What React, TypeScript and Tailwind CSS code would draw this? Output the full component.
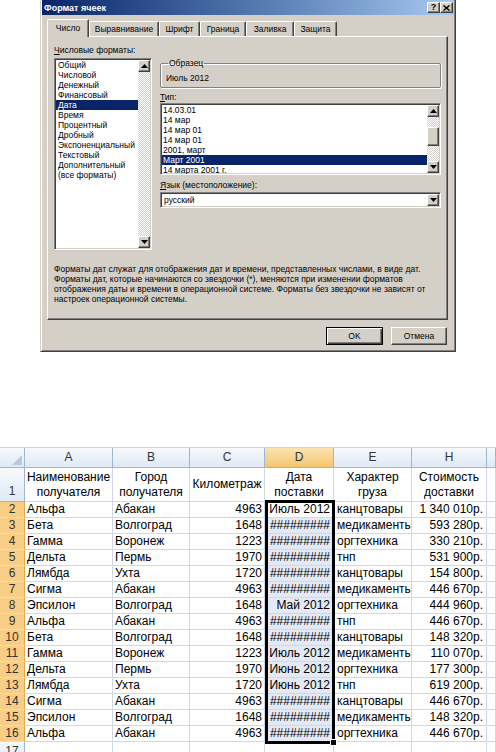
import React from "react";

const UpArrow = () => (
  <svg width="7" height="4" viewBox="0 0 7 4"><path d="M3.5 0L7 4H0Z" fill="#000" /></svg>
);
const DownArrow = () => (
  <svg width="7" height="4" viewBox="0 0 7 4"><path d="M0 0H7L3.5 4Z" fill="#000" /></svg>
);

const raised =
  "border border-t-white border-l-white border-r-[#404040] border-b-[#404040] shadow-[inset_-1px_-1px_0_#808080] bg-[#D4D0C8]";
const sunken =
  "border border-t-[#808080] border-l-[#808080] border-r-white border-b-white shadow-[inset_1px_1px_0_#404040,inset_-1px_-1px_0_#D4D0C8]";
const checker =
  "bg-[repeating-conic-gradient(#d4d0c8_0_25%,#ffffff_0_50%)] [background-size:2px_2px]";

function ScrollBtn({ up }: { up?: boolean }) {
  return (
    <div className={`${raised} h-[12px] w-[12px] flex items-center justify-center shrink-0`}>
      {up ? <UpArrow /> : <DownArrow />}
    </div>
  );
}

const formats = [
  "Общий",
  "Числовой",
  "Денежный",
  "Финансовый",
  "Дата",
  "Время",
  "Процентный",
  "Дробный",
  "Экспоненциальный",
  "Текстовый",
  "Дополнительный",
  "(все форматы)",
];

const types = [
  "14.03.01",
  "14 мар",
  "14 мар 01",
  "14 мар 01",
  "2001, март",
  "Март 2001",
  "14 марта 2001 г.",
];

const tabs: { label: string; w: string }[] = [
  { label: "Выравнивание", w: "w-[70px]" },
  { label: "Шрифт", w: "w-[41px]" },
  { label: "Граница", w: "w-[46px]" },
  { label: "Заливка", w: "w-[48px]" },
  { label: "Защита", w: "w-[43px]" },
];

function Dialog() {
  return (
    <div className="ml-[40px] w-[416px] h-[352px] bg-[#D4D0C8] border-x border-b border-l-[#D4D0C8] border-r-[#404040] border-b-[#404040] shadow-[inset_1px_0_0_#ffffff,inset_-1px_-1px_0_#808080] flex flex-col text-[8.5px] leading-[10px] text-black">
      {/* title bar */}
      <div className="h-[15px] mx-[1px] bg-linear-to-r from-[#0A246A] to-[#A6CAF0] flex items-center justify-between pl-[2px] pr-[1px]">
        <span className="font-bold text-white text-[9px]">Формат ячеек</span>
        <div className="flex">
          <div className={`${raised} w-[13px] h-[11px] flex items-center justify-center text-[9px] font-bold leading-none`}>?</div>
          <div className={`${raised} w-[13px] h-[11px] flex items-center justify-center`}>
            <svg width="7" height="6" viewBox="0 0 7 6">
              <path d="M0.5 0.5L6.5 5.5M6.5 0.5L0.5 5.5" stroke="#000" strokeWidth="1.5" />
            </svg>
          </div>
        </div>
      </div>

      <div className="pl-[6px] pr-[7px] flex flex-col">
        {/* tabs */}
        <div className="mt-[4px] h-[17px] flex items-end relative z-10">
          <div className="w-[42px] h-[18px] -mb-[1px] bg-[#D4D0C8] border-t border-l border-t-white border-l-white border-r border-r-[#404040] shadow-[inset_-1px_0_0_#808080] rounded-t-[2px] flex items-start justify-center pt-[3px]">
            Число
          </div>
          {tabs.map((t) => (
            <div
              key={t.label}
              className={`${t.w} h-[15px] border-t border-l border-t-white border-l-white border-r border-r-[#404040] shadow-[inset_-1px_0_0_#808080] rounded-t-[2px] flex items-start justify-center pt-[2px]`}
            >
              {t.label}
            </div>
          ))}
        </div>

        {/* panel */}
        <div className="h-[284px] border border-t-white border-l-white border-r-[#404040] border-b-[#404040] shadow-[inset_-1px_-1px_0_#808080] pt-[8px] pl-[6px] pr-[6px] flex flex-col">
          <div className="flex gap-[8px]">
            {/* left column */}
            <div className="w-[98px] flex flex-col">
              <div className="h-[10px] mb-[3px] whitespace-nowrap">
                <u>Ч</u>исловые форматы:
              </div>
              <div className={`${sunken} h-[192px] bg-white flex`}>
                <div className="flex-1 pt-[1px] pl-[1px] overflow-hidden">
                  {formats.map((f) => (
                    <div
                      key={f}
                      className={`h-[10px] pl-[2px] whitespace-nowrap ${f === "Дата" ? "bg-[#0A246A] text-white" : ""}`}
                    >
                      {f}
                    </div>
                  ))}
                </div>
                <div className="w-[12px] flex flex-col mt-[1px] mb-[1px] mr-[1px]">
                  <ScrollBtn up />
                  <div className={`flex-1 ${checker}`} />
                  <ScrollBtn />
                </div>
              </div>
            </div>

            {/* right column */}
            <div className="flex-1 flex flex-col mt-[13px]">
              <fieldset className="h-[30px] border border-[#808080] shadow-[inset_1px_1px_0_#ffffff,1px_1px_0_#ffffff] rounded-[2px] pl-[5px]">
                <legend className="ml-[2px] px-[1px] leading-[10px]">Образец</legend>
                <div className="pt-[5px]">Июль 2012</div>
              </fieldset>
              <div className="mt-[4px] h-[10px]">
                <u>Т</u>ип:
              </div>
              <div className={`${sunken} mt-[1px] h-[72px] bg-white flex`}>
                <div className="flex-1 pt-[1px] pl-[1px] overflow-hidden">
                  {types.map((t, i) => (
                    <div
                      key={i}
                      className={`h-[10px] pl-[1px] whitespace-nowrap ${i === 5 ? "bg-[#0A246A] text-white" : ""}`}
                    >
                      {t}
                    </div>
                  ))}
                </div>
                <div className="w-[12px] flex flex-col my-[1px] mr-[1px]">
                  <ScrollBtn up />
                  <div className={`h-[10px] ${checker}`} />
                  <div className={`${raised} h-[19px]`} />
                  <div className={`flex-1 ${checker}`} />
                  <ScrollBtn />
                </div>
              </div>
              <div className="mt-[5px] h-[10px] whitespace-nowrap">
                <u>Я</u>зык (местоположение):
              </div>
              <div className={`${sunken} mt-[2px] h-[16px] bg-white flex items-center`}>
                <div className="flex-1 pl-[3px]">русский</div>
                <div className="mr-[1px]">
                  <ScrollBtn />
                </div>
              </div>
            </div>
          </div>

          <div className="mt-[14px] whitespace-nowrap">
            Форматы дат служат для отображения дат и времени, представленных числами, в виде дат.
            <br />
            Форматы дат, которые начинаются со звездочки (*), меняются при изменении форматов
            <br />
            отображения даты и времени в операционной системе. Форматы без звездочки не зависят от
            <br />
            настроек операционной системы.
          </div>
        </div>

        {/* buttons */}
        <div className="mt-[7px] flex justify-end gap-[8px] mr-[1px]">
          <div className="w-[57px] h-[18px] bg-[#D4D0C8] border border-black shadow-[inset_1px_1px_0_#ffffff,inset_-1px_-1px_0_#404040,inset_-2px_-2px_0_#808080] flex items-center justify-center">
            OK
          </div>
          <div className={`${raised} w-[56px] h-[18px] flex items-center justify-center`}>Отмена</div>
        </div>
      </div>
    </div>
  );
}

const data: string[][] = [
  ["Альфа", "Абакан", "4963", "Июль 2012", "канцтовары", "1 340 010р."],
  ["Бета", "Волгоград", "1648", "#########", "медикаменты", "593 280р."],
  ["Гамма", "Воронеж", "1223", "#########", "оргтехника", "330 210р."],
  ["Дельта", "Пермь", "1970", "#########", "тнп", "531 900р."],
  ["Лямбда", "Ухта", "1720", "#########", "канцтовары", "154 800р."],
  ["Сигма", "Абакан", "4963", "#########", "медикаменты", "446 670р."],
  ["Эпсилон", "Волгоград", "1648", "Май 2012", "оргтехника", "444 960р."],
  ["Альфа", "Абакан", "4963", "#########", "тнп", "446 670р."],
  ["Бета", "Волгоград", "1648", "#########", "канцтовары", "148 320р."],
  ["Гамма", "Воронеж", "1223", "Июль 2012", "медикаменты", "110 070р."],
  ["Дельта", "Пермь", "1970", "Июнь 2012", "оргтехника", "177 300р."],
  ["Лямбда", "Ухта", "1720", "Июнь 2012", "тнп", "619 200р."],
  ["Сигма", "Абакан", "4963", "#########", "канцтовары", "446 670р."],
  ["Эпсилон", "Волгоград", "1648", "#########", "медикаменты", "148 320р."],
  ["Альфа", "Абакан", "4963", "#########", "оргтехника", "446 670р."],
];

const gridCols = "grid grid-cols-[25px_88px_77px_75px_69px_78px_75px_9px]";
const hdr =
  "bg-linear-to-b from-[#F7F9FC] to-[#E1E9F5] border-r border-b border-[#9EB6CE] text-center leading-[19px] text-[#333333]";
const cell = "border-r border-b border-[#D0D7E5] whitespace-nowrap overflow-hidden leading-[15px]";

function Sheet() {
  return (
    <div className="border-t border-[#C9D5E4] text-[12px] text-black">
      <div className="relative">
        {/* column headers */}
        <div className={`${gridCols} h-[20px]`}>
          <div className={`${hdr} relative`}>
            <svg className="absolute right-[2px] bottom-[2px]" width="10" height="10" viewBox="0 0 10 10">
              <path d="M10 0V10H0Z" fill="#B9C9DD" />
            </svg>
          </div>
          {["A", "B", "C"].map((l) => (
            <div key={l} className={hdr}>{l}</div>
          ))}
          <div className="bg-linear-to-b from-[#FBE3B1] to-[#F5C56C] border-r border-b border-[#F0A830] text-center leading-[19px] text-[#333333]">
            D
          </div>
          {["E", "H"].map((l) => (
            <div key={l} className={hdr}>{l}</div>
          ))}
          <div className={hdr} />
        </div>

        {/* row 1 */}
        <div className={`${gridCols} h-[34px]`}>
          <div className={`${hdr} flex items-end justify-center leading-[15px]`}>1</div>
          {[
            ["Наименование", "получателя"],
            ["Город", "получателя"],
            ["Километраж"],
            ["Дата", "поставки"],
            ["Характер", "груза"],
            ["Стоимость", "доставки"],
          ].map((lines, i) => (
            <div key={i} className={`${cell} flex flex-col items-center justify-center`}>
              {lines.map((ln) => (
                <span key={ln}>{ln}</span>
              ))}
            </div>
          ))}
          <div className={cell} />
        </div>

        {/* data rows */}
        {data.map((r, i) => (
          <div key={i} className={`${gridCols} h-[16px]`}>
            <div className="bg-[#F8CE86] border-r border-b border-r-[#E5A94C] border-b-[#F6DCAE] text-center leading-[15px] text-[#333333]">
              {i + 2}
            </div>
            <div className={`${cell} pl-[2px]`}>{r[0]}</div>
            <div className={`${cell} pl-[2px]`}>{r[1]}</div>
            <div className={`${cell} text-right pr-[2px]`}>{r[2]}</div>
            <div className={`${cell} text-right pr-[3px] ${i === 0 ? "bg-white" : "bg-[#E3E9F5]"}`}>{r[3]}</div>
            <div className={`${cell} pl-[3px]`}>{r[4]}</div>
            <div className={`${cell} text-right pr-[3px]`}>{r[5]}</div>
            <div className={cell} />
          </div>
        ))}

        {/* row 17 */}
        <div className={`${gridCols} h-[16px]`}>
          <div className={`${hdr} leading-[15px]`}>17</div>
          {Array.from({ length: 7 }).map((_, i) => (
            <div key={i} className={cell} />
          ))}
        </div>

        {/* selection border */}
        <div className="absolute left-[265px] top-[52px] w-[70px] h-[244px] border-[3px] border-black pointer-events-none">
          <div className="absolute -right-[5px] -bottom-[5px] w-[7px] h-[7px] bg-black border border-white" />
        </div>
      </div>
    </div>
  );
}

export default function App() {
  return (
    <div className="w-[496px] h-[752px] overflow-hidden bg-white font-['Liberation_Sans',Arial,sans-serif]">
      <Dialog />
      <div className="h-[95px]" />
      <Sheet />
    </div>
  );
}
